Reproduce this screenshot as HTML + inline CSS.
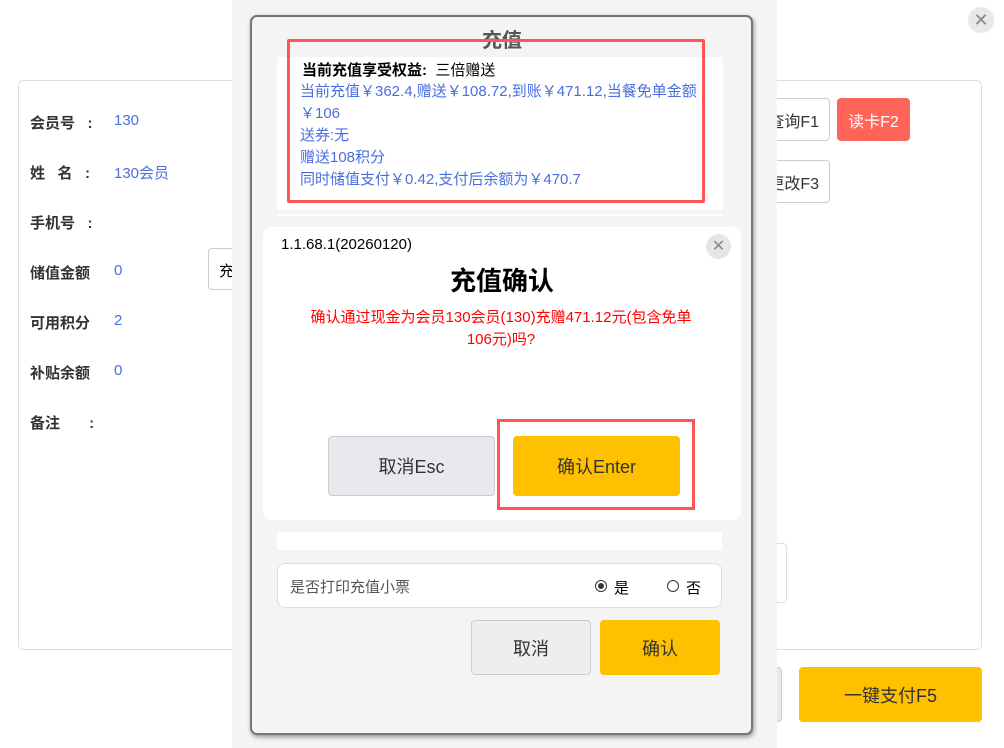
<!DOCTYPE html>
<html><head><meta charset="utf-8"><style>
*{margin:0;padding:0;box-sizing:border-box}
body{width:1004px;height:748px;background:#fff;position:relative;overflow:hidden;font-family:"Liberation Sans","Noto Sans CJK SC",sans-serif;}
.a{position:absolute}
.lbl{position:absolute;left:30px;font-size:15px;font-weight:bold;color:#333}
.val{position:absolute;left:114px;font-size:15px;color:#4a6ee0}
.btn{position:absolute;display:flex;align-items:center;justify-content:center;border-radius:4px}
.bl{color:#4a6ee0;font-size:15px;position:absolute;left:300px;white-space:nowrap}
</style></head><body>
<div class="a" style="left:968px;top:7px;width:26px;height:26px;border-radius:50%;background:#e8e8e8;color:#888;font-size:18px;text-align:center;line-height:26px">✕</div>
<div class="a" style="left:18px;top:80px;width:964px;height:570px;border:1px solid #ddd;border-radius:5px"></div>
<div class="lbl" style="top:112px">会员号 &nbsp;&nbsp;:</div><div class="val" style="top:112px">130</div>
<div class="lbl" style="top:162px">姓 &nbsp; 名 &nbsp;&nbsp;:</div><div class="val" style="top:162px">130会员</div>
<div class="lbl" style="top:212px">手机号 &nbsp;&nbsp;:</div>
<div class="lbl" style="top:262px">储值金额</div><div class="val" style="top:262px">0</div>
<div class="lbl" style="top:312px">可用积分</div><div class="val" style="top:312px">2</div>
<div class="lbl" style="top:362px">补贴余额</div><div class="val" style="top:362px">0</div>
<div class="lbl" style="top:412px">备注 &nbsp;&nbsp;&nbsp;&nbsp;&nbsp;&nbsp;:</div>
<div class="a" style="left:208px;top:248px;width:40px;height:42px;border:1px solid #ccc;border-radius:4px;padding:11px 10px;font-size:15px">充</div>
<div class="btn" style="left:730px;top:98px;width:100px;height:43px;border:1px solid #ccc;background:#fff;font-size:16px;color:#333;justify-content:flex-end;padding-right:10px">查询F1</div>
<div class="btn" style="left:837px;top:98px;width:73px;height:43px;background:#ff6459;color:#fff;font-size:16px">读卡F2</div>
<div class="btn" style="left:730px;top:160px;width:100px;height:43px;border:1px solid #ccc;background:#fff;font-size:16px;color:#333;justify-content:flex-end;padding-right:10px">更改F3</div>
<div class="a" style="left:740px;top:543px;width:47px;height:60px;border:1px solid #ddd;border-radius:4px"></div>
<div class="a" style="left:740px;top:667px;width:42px;height:55px;border:1px solid #ccc;border-radius:4px;background:#e8e9ee"></div>
<div class="btn" style="left:799px;top:667px;width:183px;height:55px;background:#ffc000;font-size:18px;color:#333">一键支付F5</div>
<div class="a" style="left:232px;top:0;width:545px;height:748px;background:#f4f4f4"></div>
<div class="a" style="left:250px;top:15px;width:503px;height:720px;border:2px solid #777;border-radius:7px;background:#f4f4f4;box-shadow:1px 2px 5px rgba(0,0,0,.4)"></div>
<div class="a" style="left:0;width:1004px;text-align:center;top:24px;font-size:20px;font-weight:bold;color:#555">充值</div>
<div class="a" style="left:277px;top:57px;width:446px;height:153px;background:#fff"></div>
<div class="a" style="left:302px;top:59px;font-size:15px;color:#000"><b>当前充值享受权益:</b>&nbsp; 三倍赠送</div>
<div class="bl" style="top:80px">当前充值￥362.4,赠送￥108.72,到账￥471.12,当餐免单金额</div>
<div class="bl" style="top:102px">￥106</div>
<div class="bl" style="top:124px">送券:无</div>
<div class="bl" style="top:146px">赠送108积分</div>
<div class="bl" style="top:168px">同时储值支付￥0.42,支付后余额为￥470.7</div>
<div class="a" style="left:287px;top:39px;width:418px;height:164px;border:3px solid #f55;border-radius:2px"></div>
<div class="a" style="left:277px;top:214px;width:445px;height:2px;background:#fff"></div>
<div class="a" style="left:263px;top:227px;width:478px;height:293px;background:#fff;border-radius:8px"></div>
<div class="a" style="left:281px;top:236px;font-size:15px;color:#000">1.1.68.1(20260120)</div>
<div class="a" style="left:706px;top:234px;width:25px;height:25px;border-radius:50%;background:#e6e6e6;color:#888;text-align:center;line-height:25px;font-size:16px">✕</div>
<div class="a" style="left:263px;width:478px;text-align:center;top:261px;font-size:26px;font-weight:bold;color:#000">充值确认</div>
<div class="a" style="left:294px;width:414px;text-align:center;top:307px;font-size:15px;line-height:22px;color:#f00">确认通过现金为会员130会员(130)充赠471.12元(包含免单<br>106元)吗?</div>
<div class="btn" style="left:328px;top:436px;width:167px;height:60px;background:#e8e9ee;border:1px solid #ccc;font-size:18px;color:#333">取消Esc</div>
<div class="btn" style="left:513px;top:436px;width:167px;height:60px;background:#ffc000;font-size:18px;color:#333">确认Enter</div>
<div class="a" style="left:497px;top:419px;width:198px;height:91px;border:3px solid #f55"></div>
<div class="a" style="left:277px;top:532px;width:445px;height:18px;background:#fff"></div>
<div class="a" style="left:277px;top:563px;width:445px;height:45px;background:#fff;border:1px solid #ddd;border-radius:8px"></div>
<div class="a" style="left:290px;top:576px;font-size:15px;color:#555">是否打印充值小票</div>
<div class="a" style="left:595px;top:580px;width:12px;height:12px;border:1px solid #333;border-radius:50%"><div style="margin:2px;width:6px;height:6px;border-radius:50%;background:#333"></div></div>
<div class="a" style="left:614px;top:577px;font-size:15px;color:#000">是</div>
<div class="a" style="left:667px;top:580px;width:12px;height:12px;border:1px solid #333;border-radius:50%"></div>
<div class="a" style="left:686px;top:577px;font-size:15px;color:#000">否</div>
<div class="btn" style="left:471px;top:620px;width:120px;height:55px;background:#eee;border:1px solid #ccc;font-size:18px;color:#333">取消</div>
<div class="btn" style="left:600px;top:620px;width:120px;height:55px;background:#ffc000;font-size:18px;color:#333">确认</div>
</body></html>
